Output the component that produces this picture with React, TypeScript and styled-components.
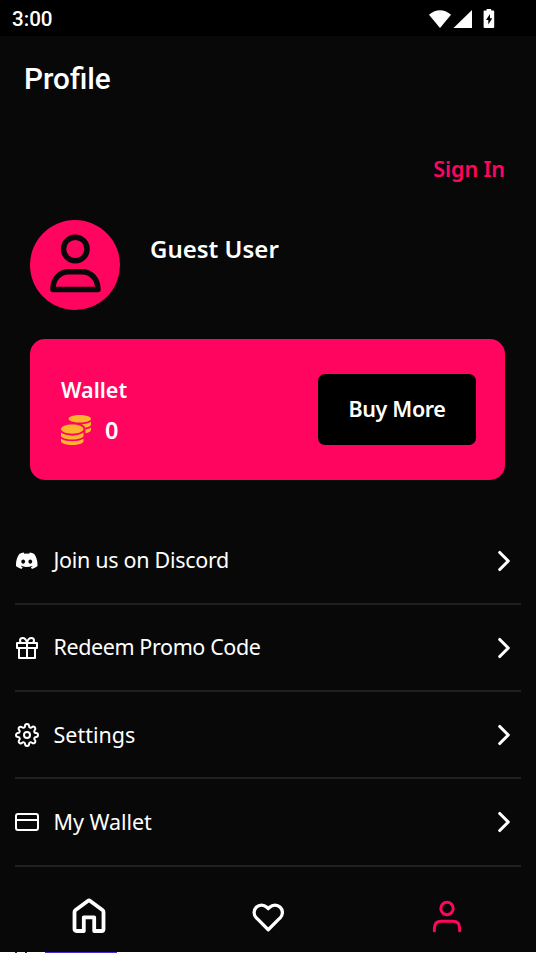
import React from 'react';
import styled, { createGlobalStyle } from 'styled-components';
import { FiGift, FiSettings, FiCreditCard, FiChevronRight, FiHeart } from 'react-icons/fi';
import { FaCoins } from 'react-icons/fa';
import { BsDiscord } from 'react-icons/bs';

const PINK = '#ff0560';

const GlobalStyle = createGlobalStyle`
  * { box-sizing: border-box; }
  html, body { margin: 0; padding: 0; background: #080808; overflow: hidden; }
  svg { display: block; flex: none; }
`;

const Screen = styled.div`
  width: 536px;
  height: 953px;
  display: flex;
  flex-direction: column;
  background: #080808;
  color: #fff;
  font-family: 'Noto Sans', sans-serif;
  overflow: hidden;
`;

const StatusBar = styled.header`
  height: 36px;
  flex: none;
  display: flex;
  justify-content: space-between;
  align-items: center;
  padding: 2px 40px 0 12px;
  background: #000;
  font: 500 20.6px/24px Roboto, sans-serif;
`;

const Title = styled.h1`
  flex: none;
  height: 86px;
  margin: 0;
  padding: 0 24px;
  font: 500 29.7px/86px Roboto, sans-serif;
`;

const Label = styled.span<{ $size: number; $weight?: number; $spacing?: number }>`
  font-size: ${(p) => p.$size}px;
  font-weight: ${(p) => p.$weight ?? 400};
  letter-spacing: ${(p) => p.$spacing ?? 0}px;
  line-height: 40px;
  white-space: nowrap;
`;

const SignIn = styled.div`
  display: flex;
  justify-content: flex-end;
  height: 97.5px;
  flex: none;
  padding: 27px 31px 0;
  color: ${PINK};
`;

const User = styled.section`
  display: flex;
  gap: 30px;
  height: 90px;
  flex: none;
  padding: 0 30px;
`;

const Avatar = styled.div`
  width: 90px;
  height: 90px;
  border-radius: 50%;
  background: ${PINK};
`;

const UserName = styled.div`
  padding-top: 9px;
`;

const WalletCard = styled.section`
  display: flex;
  align-items: center;
  justify-content: space-between;
  flex: none;
  height: 141px;
  margin: 29.5px 31px 0 30px;
  padding: 0 29px 0 31px;
  border-radius: 15px;
  background: ${PINK};
`;

const Balance = styled.div`
  display: flex;
  flex-direction: column;
`;

const Coins = styled.div`
  display: flex;
  align-items: center;
  gap: 14px;
  color: #fdb52d;
  span { color: #fff; }
`;

const BuyButton = styled.button`
  width: 158px;
  height: 71px;
  padding: 0 0 2px;
  border: 0;
  border-radius: 7px;
  background: #000;
  color: #fff;
  font-family: inherit;
`;

const Menu = styled.nav`
  display: flex;
  flex-direction: column;
  flex: none;
  margin: 37.5px 15px 0;
`;

const MenuRow = styled.div`
  display: flex;
  align-items: center;
  height: 87.25px;
  padding-top: 1px;
  border-bottom: 2px solid #202020;
`;

const MenuIcon = styled.div`
  display: grid;
  place-items: center;
  width: 24px;
`;

const MenuText = styled.div`
  flex: 1;
  padding: 0 0 1px 14.5px;
`;

const TabBar = styled.nav`
  display: grid;
  grid-template-columns: repeat(3, 1fr);
  place-items: center;
  flex: 1;
  padding-top: 16px;
`;

const PageEdge = styled.div`
  display: flex;
  height: 1px;
  flex: none;
  background: #fff;
  padding-left: 15px;
`;

const EdgeMark = styled.div<{ $width: number; $gap: number; $color: string }>`
  width: ${(p) => p.$width}px;
  margin-right: ${(p) => p.$gap}px;
  background: ${(p) => p.$color};
`;

const StatusIcons = () => (
  <svg width="68" height="22" viewBox="0 0 68 22" fill="#fff">
    <path d="M1 6.7Q12 -2.2 23 6.7L12 20Z" />
    <path d="M44 2V20H25.5Z" />
    <path d="M56.6 2.5h2V1h4.6v1.5h2q1 0 1 1v15.6q0 1-1 1h-8.6q-1 0-1-1V3.5q0-1 1-1Z" />
    <path d="m62 6-4 6h2.3v4.5l4-6.2H62Z" fill="#000" />
  </svg>
);

const AvatarIcon = () => (
  <svg width="90" height="90" viewBox="0 0 90 90" fill="none" stroke="#080808" strokeWidth="5.4" strokeLinejoin="round">
    <circle cx="45.3" cy="29" r="11.8" />
    <path d="M22.9 69.5C22.9 58.5 30 51.7 38.5 51.7H52C61 51.7 68 59 68 69.5Z" />
  </svg>
);

const HomeIcon = () => (
  <svg width="36" height="38" viewBox="0 0 36 38" fill="none" stroke="#fff" strokeWidth="3.8" strokeLinejoin="round">
    <path d="M3.5 14Q3.5 12.8 4.6 12L16.8 2.9Q18 2 19.2 2.9L31.4 12Q32.5 12.8 32.5 14V31Q32.5 33 30.5 33H23.2V19.3H12.8V33H5.5Q3.5 33 3.5 31Z" />
  </svg>
);

const PersonIcon = () => (
  <svg width="32" height="34" viewBox="0 0 32 34" fill="none" stroke={PINK} strokeWidth="3" strokeLinecap="round">
    <circle cx="16" cy="8.5" r="6.2" />
    <path d="M3.4 30.7V28Q3.4 21.2 10.3 21.2H21.7Q28.6 21.2 28.6 28V30.7" />
  </svg>
);

const items = [
  { text: 'Join us on Discord', icon: <BsDiscord size={21.5} />, spacing: -0.3 },
  { text: 'Redeem Promo Code', icon: <FiGift size={24} />, spacing: -0.4 },
  { text: 'Settings', icon: <FiSettings size={24} />, spacing: 0 },
  { text: 'My Wallet', icon: <FiCreditCard size={24} />, spacing: -0.05 },
];

export default function App() {
  return (
    <>
      <GlobalStyle />
      <Screen>
        <StatusBar>
          <span>3:00</span>
          <StatusIcons />
        </StatusBar>
        <Title>Profile</Title>
        <SignIn>
          <Label $size={21.5} $weight={600} $spacing={-0.1}>Sign In</Label>
        </SignIn>
        <User>
          <Avatar><AvatarIcon /></Avatar>
          <UserName><Label $size={24} $weight={600}>Guest User</Label></UserName>
        </User>
        <WalletCard>
          <Balance>
            <Label $size={21.5} $weight={600}>Wallet</Label>
            <Coins><FaCoins size={30} /><Label $size={23.5} $weight={600}>0</Label></Coins>
          </Balance>
          <BuyButton><Label $size={21.5} $weight={600} $spacing={-0.35}>Buy More</Label></BuyButton>
        </WalletCard>
        <Menu>
          {items.map((item) => (
            <MenuRow key={item.text}>
              <MenuIcon>{item.icon}</MenuIcon>
              <MenuText><Label $size={21.5} $spacing={item.spacing}>{item.text}</Label></MenuText>
              <FiChevronRight size={34} strokeWidth={2.2} />
            </MenuRow>
          ))}
        </Menu>
        <TabBar>
          <HomeIcon />
          <FiHeart size={32.5} strokeWidth={2.4} />
          <PersonIcon />
        </TabBar>
        <PageEdge>
          <EdgeMark $width={2} $gap={8} $color="#333" />
          <EdgeMark $width={2} $gap={18} $color="#333" />
          <EdgeMark $width={72} $gap={0} $color="#4a2fd0" />
        </PageEdge>
      </Screen>
    </>
  );
}
